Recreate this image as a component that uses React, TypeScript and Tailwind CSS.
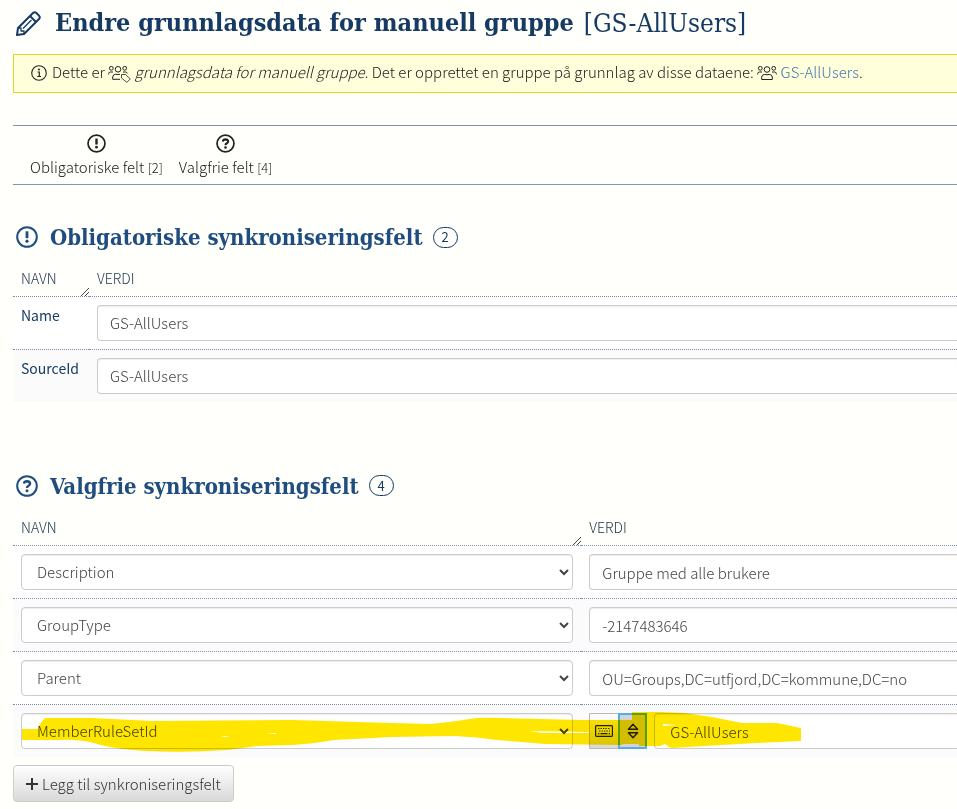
import React, { useState } from 'react';

type Kind = 'required' | 'optional';

const requiredFields = [
  { name: 'Name', value: 'GS-AllUsers' },
  { name: 'SourceId', value: 'GS-AllUsers' },
];

const fieldNames = ['Description', 'GroupType', 'Parent', 'MemberRuleSetId'];

const initialOptional = [
  { name: 'Description', value: 'Gruppe med alle brukere' },
  { name: 'GroupType', value: '-2147483646' },
  { name: 'Parent', value: 'OU=Groups,DC=utfjord,DC=kommune,DC=no' },
  { name: 'MemberRuleSetId', value: 'GS-AllUsers' },
];

const sans = "font-['Noto_Sans_CJK_SC','Open_Sans',sans-serif]";
const serif = "font-['DejaVu_Serif_Condensed','DejaVu_Serif',serif]";

// fields run to the edge of the window, so they have no right border
const fieldClass =
  'block h-9 w-full rounded-l-[4px] border border-r-0 border-[#ccc] bg-white text-[15px] text-[#444] shadow-[inset_0_1px_1px_rgba(0,0,0,0.075)]';

function PencilIcon() {
  return (
    <svg className="h-7 w-7 shrink-0" viewBox="0 0 28 28" fill="none" stroke="currentColor" strokeWidth="2" strokeLinejoin="round">
      <path d="M4 26 L5 19 L20 4 Q21.7 2.5 23.4 4 L26 6.6 Q27.5 8.3 26 10 L11 25 Z" />
      <path d="M17 7 L23 13" />
      <path d="M5.5 19 H8 V22 H11 V25 M10 19.5 L18.5 11" strokeWidth="1.3" />
    </svg>
  );
}

function InfoIcon() {
  return (
    <svg className="mr-[5px] h-4 w-4 shrink-0" viewBox="0 0 16 16" fill="none" stroke="currentColor">
      <circle cx="8" cy="8" r="7.3" strokeWidth="1.1" />
      <path d="M6.5 7 H8.3 V11.3 M6.3 11.5 H10" strokeWidth="1.2" />
      <circle cx="8" cy="4.4" r="1" fill="currentColor" stroke="none" />
    </svg>
  );
}

function UsersIcon() {
  return (
    <svg className="inline h-4 w-5" viewBox="0 0 20 16" fill="none" stroke="currentColor" strokeWidth="1">
      <circle cx="3.3" cy="2.3" r="1.9" />
      <circle cx="16.7" cy="2.3" r="1.9" />
      <circle cx="10" cy="3.5" r="2.8" />
      <path d="M.7 8.5 V7.5 Q.8 6 2.5 6 H5 M19.3 8.5 V7.5 Q19.2 6 17.5 6 H15" />
      <path d="M4.7 13.5 V11 Q5 8.4 7.8 8.4 Q10 9.2 12.2 8.4 Q15 8.4 15.3 11 V13.5 Z" />
    </svg>
  );
}

function UsersTagIcon() {
  return (
    <svg className="inline h-[18px] w-[23px]" viewBox="0 0 23 18" fill="none" stroke="currentColor" strokeWidth="1">
      <circle cx="3.3" cy="3.3" r="1.9" />
      <circle cx="16.7" cy="3.3" r="1.9" />
      <circle cx="10" cy="4.3" r="2.8" />
      <path d="M.7 9.5 V8.5 Q.8 7 2.5 7 H5 M19.3 8.5 Q19 7 17.5 7 H15" />
      <path d="M12 14.3 H4.7 V12 Q5 9.2 7.8 9.2 Q10 10 12 9.2" />
      <path d="M13.5 9.5 H17.5 L22.3 14 L18.8 17.3 L13.5 13 Z" strokeWidth="0.8" />
    </svg>
  );
}

function StatusIcon({ kind, className }: { kind: Kind; className: string }) {
  return (
    <svg className={className} viewBox="0 0 22 22" fill="none" stroke="currentColor">
      <circle cx="11" cy="11" r="9.8" strokeWidth="2" />
      {kind === 'required' ? (
        <>
          <path d="M11 5.3 V12.2" strokeWidth="2.8" />
          <circle cx="11" cy="15.2" r="1.6" fill="currentColor" stroke="none" />
        </>
      ) : (
        <>
          <path d="M7.8 8.6 Q8.3 6.2 11 6.2 Q14.1 6.4 14.1 8.7 Q14 10 12.2 11 Q11 11.6 11 13" strokeWidth="2.4" />
          <circle cx="11" cy="15.7" r="1.5" fill="currentColor" stroke="none" />
        </>
      )}
    </svg>
  );
}

function KeyboardIcon() {
  return (
    <svg className="h-3 w-[18px]" viewBox="0 0 18 12" fill="none" stroke="currentColor">
      <rect x="0.6" y="0.6" width="16.8" height="10.8" rx="0.8" strokeWidth="1.2" />
      <path d="M3 3.5 H15.5 M4 6 H15" strokeWidth="1.2" strokeDasharray="1.3 1.2" />
      <path d="M3 8.6 H4.3 M5.5 8.6 H12.5 M13.7 8.6 H15" strokeWidth="1.2" />
    </svg>
  );
}

function SortIcon() {
  return (
    <svg className="h-4 w-3" viewBox="0 0 12 16" fill="none" stroke="currentColor" strokeWidth="1.4" strokeLinejoin="round">
      <path d="M6 1.2 L10.6 6.2 H1.4 Z M6 14.8 L10.6 9.8 H1.4 Z" />
    </svg>
  );
}

// marker stroke over the last row
function Highlight() {
  return (
    <svg className="pointer-events-none absolute bottom-[3px] left-[9px] h-[42px] w-[779px] mix-blend-multiply" viewBox="0 0 779 42" fill="#ffe600">
      <path d="M0 17 H16 Q17 12 23 6 L70 6 L130 9 L270 8 L370 11 L408 12 Q430 10 447 7 Q460 5 480 6 L560 8 H610 V0 H640 L662 1 L690 5 L720 11 H755 L779 16 V29 L735 31 L665 35 L650 36 Q646 35 643 32 L638 34 H617 V32 H600 V33 L523 32 L500 30 L475 28 Q455 25 432 24 L370 25 L312 28 Q290 32 270 33 L235 34 L205 38 Q165 41 125 39 Q90 37 72 31 Q55 27 35 28 H0 Z" />
      <path d="M199 24 H208 L203 25 Z M244 21 L254 21 V22 Z M508 19 L567 20 V21 H520 Z M641 12 L655 13 L641 14 Z" fill="#fff" />
    </svg>
  );
}

function SectionHeading({ kind, title, count }: { kind: Kind; title: string; count: number }) {
  return (
    <h2 className={`flex h-8 items-center pl-[3px] text-[22px] font-bold whitespace-nowrap text-[#204d80] ${serif}`}>
      <StatusIcon kind={kind} className="mr-3 h-[22px] w-[22px] shrink-0" />
      {title}
      <span className={`ml-[10px] flex h-[21px] w-[25px] items-center justify-center rounded-full border border-[#163a63] text-[13px] font-normal text-[#163a63] ${sans}`}>
        {count}
      </span>
    </h2>
  );
}

function HeadRow({ nameWidth }: { nameWidth: string }) {
  return (
    <thead>
      <tr className="h-9 border-b border-dotted border-[#7d8fa8] text-left text-[14px] text-[#1c2f48]">
        <th scope="col" className={`relative px-2 font-light ${nameWidth}`}>
          NAVN
          <svg className="absolute right-0 bottom-0 h-2 w-2" viewBox="0 0 8 8" stroke="#444" fill="none">
            <path d="M0 8 L8 0 M4 8 L8 4" />
          </svg>
        </th>
        <th scope="col" className="px-2 font-light">VERDI</th>
      </tr>
    </thead>
  );
}

export default function App() {
  const [required, setRequired] = useState(requiredFields);
  const [optional, setOptional] = useState(initialOptional);

  const updateRequired = (index: number, value: string) => {
    setRequired(required.map((f, i) => (i === index ? { ...f, value } : f)));
  };

  const updateOptional = (index: number, key: 'name' | 'value', value: string) => {
    setOptional(optional.map((f, i) => (i === index ? { ...f, [key]: value } : f)));
  };

  const addField = () => setOptional([...optional, { name: 'Description', value: '' }]);

  return (
    <div className={`min-h-screen overflow-hidden bg-[#fffffb] pl-[13px] text-[15px] leading-5 font-light text-[#222] ${sans}`}>
      <h1 className={`flex h-[54px] items-center pb-2 whitespace-nowrap text-[#163a63] ${serif}`}>
        <PencilIcon />
        <span className="ml-[14px] text-[25px] font-bold">Endre grunnlagsdata for manuell gruppe</span>
        <span className="ml-[10px] text-[26px]">[GS-AllUsers]</span>
      </h1>

      <div className="flex h-[39px] items-center border border-r-0 border-[#d9d91f] bg-[#ffffdc] pb-[2px] pl-[17px]">
        <InfoIcon />
        <p className="whitespace-nowrap">
          Dette er <UsersTagIcon /> <em>grunnlagsdata for manuell gruppe</em>. Det er opprettet en gruppe på grunnlag av disse dataene:{' '}
          <UsersIcon /> <a href="#gruppe" className="text-[#4478ae]">GS-AllUsers</a>.
        </p>
      </div>

      <nav className="mt-8 flex gap-4 border-y border-[#8494ae] px-[17px] pt-2 pb-[6px]">
        <a href="#obligatoriske" className="flex flex-col items-center gap-1">
          <StatusIcon kind="required" className="h-[19px] w-[19px]" />
          <span>Obligatoriske felt <span className="text-[13px]">[2]</span></span>
        </a>
        <a href="#valgfrie" className="flex flex-col items-center gap-1">
          <StatusIcon kind="optional" className="h-[19px] w-[19px]" />
          <span>Valgfrie felt <span className="text-[13px]">[4]</span></span>
        </a>
      </nav>

      <section id="obligatoriske" className="mt-9">
        <SectionHeading kind="required" title="Obligatoriske synkroniseringsfelt" count={required.length} />
        <table className="mt-[7px] w-full table-fixed border-collapse">
          <HeadRow nameWidth="w-[76px]" />
          <tbody>
            {required.map((field, i) => (
              <tr key={field.name} className="border-b border-dotted border-[#7d8fa8] bg-white last:border-b-0 even:bg-[#fbfbfb]">
                <th scope="row" className="px-2 pt-2 text-left align-top text-[14px] font-normal text-[#163a63]">
                  <label htmlFor={field.name}>{field.name}</label>
                </th>
                <td className="py-2 pl-2">
                  <input id={field.name} className={`${fieldClass} px-3`} value={field.value} onChange={(e) => updateRequired(i, e.target.value)} />
                </td>
              </tr>
            ))}
          </tbody>
        </table>
      </section>

      <section id="valgfrie" className="mt-17">
        <SectionHeading kind="optional" title="Valgfrie synkroniseringsfelt" count={optional.length} />
        <div className="relative mt-2">
          <table className="w-full table-fixed border-collapse">
            <HeadRow nameWidth="w-[60.2%]" />
            <tbody>
              {optional.map((field, i) => (
                <tr key={i} className="border-b border-dotted border-[#7d8fa8] bg-white last:border-b-0 even:bg-[#fbfbfb]">
                  <td className="p-2">
                    <div className="relative">
                      <select
                        aria-label="Navn"
                        value={field.name}
                        onChange={(e) => updateOptional(i, 'name', e.target.value)}
                        className="block h-9 w-full appearance-none rounded-[4px] border border-[#ccc] bg-white px-[15px] text-[15px] text-[#444] shadow-[inset_0_1px_1px_rgba(0,0,0,0.075)]"
                      >
                        {fieldNames.map((name) => (
                          <option key={name}>{name}</option>
                        ))}
                      </select>
                      <svg className="pointer-events-none absolute top-[15px] right-1 h-[7px] w-[10px]" viewBox="0 0 10 7" fill="none" stroke="#444" strokeWidth="2">
                        <path d="M1 1 L5 5 L9 1" />
                      </svg>
                    </div>
                  </td>
                  <td className="py-2 pl-2">
                    {field.name === 'MemberRuleSetId' ? (
                      <div className="flex">
                        <button type="button" aria-label="Tekst" className="flex h-9 w-[29px] shrink-0 items-center justify-center border border-r-0 border-[#bbb] bg-linear-to-b from-white to-[#d8d8d8]">
                          <KeyboardIcon />
                        </button>
                        <button type="button" aria-label="Velg" className="mr-[7px] flex h-9 w-[29px] shrink-0 items-center justify-center border-2 border-[#55aee0] bg-[#d2d2d8]">
                          <SortIcon />
                        </button>
                        <input aria-label="Verdi" className={`${fieldClass} pr-3 pl-[15px]`} value={field.value} onChange={(e) => updateOptional(i, 'value', e.target.value)} />
                      </div>
                    ) : (
                      <input aria-label="Verdi" className={`${fieldClass} px-3`} value={field.value} onChange={(e) => updateOptional(i, 'value', e.target.value)} />
                    )}
                  </td>
                </tr>
              ))}
            </tbody>
          </table>
          <Highlight />
        </div>
        <button
          type="button"
          onClick={addField}
          className="mt-2 flex h-[37px] items-center gap-1 rounded-[4px] border border-[#ccc] bg-linear-to-b from-white to-[#d9d9d9] px-3 text-[#333]"
        >
          <svg className="h-3 w-3" viewBox="0 0 12 12" stroke="currentColor" strokeWidth="2">
            <path d="M6 0 V12 M0 6 H12" />
          </svg>
          Legg til synkroniseringsfelt
        </button>
      </section>
    </div>
  );
}
